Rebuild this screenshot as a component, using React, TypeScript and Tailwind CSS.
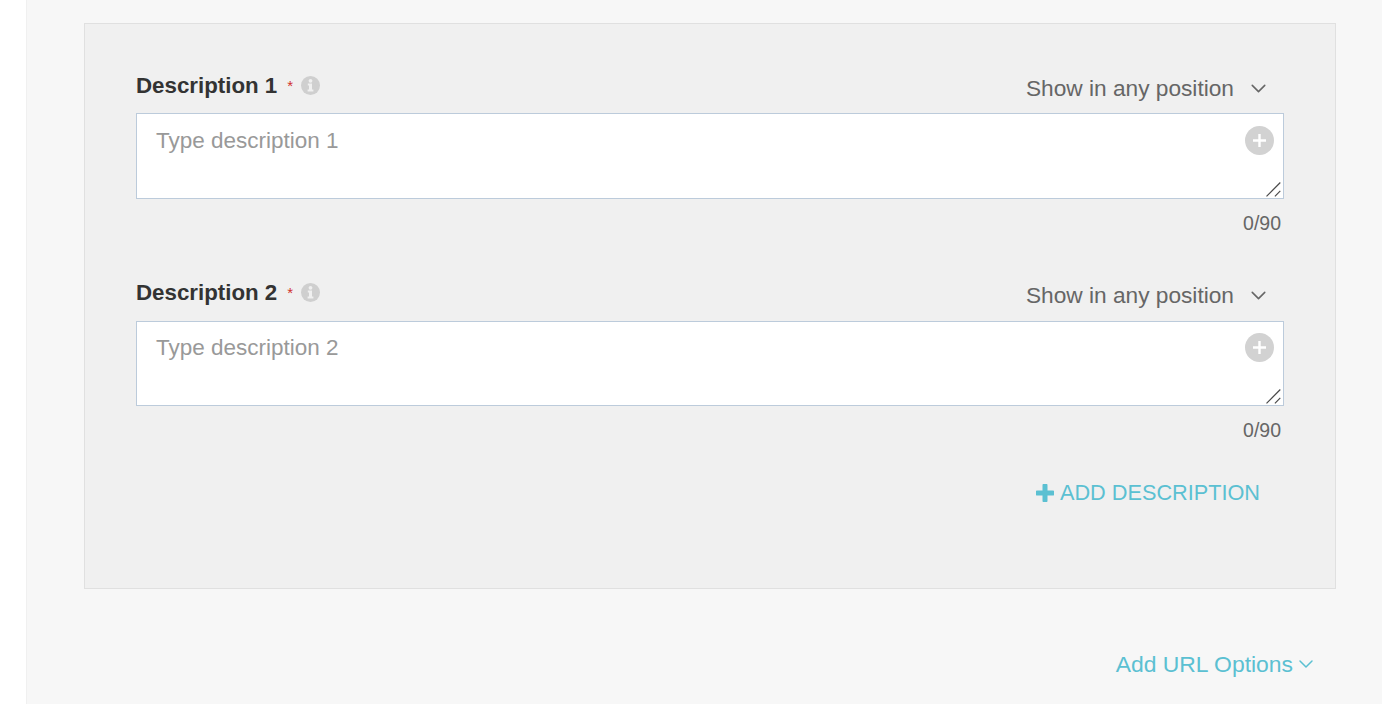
import { ChevronDown } from "lucide-react";

function DescriptionField({ n, compact }: { n: number; compact?: boolean }) {
  return (
    <div>
      <div className="flex items-start justify-between pr-[13px]">
        <div className="flex items-center h-[24px]">
          <span className="text-[22.3px] leading-[24px] font-bold text-[#333]">Description {n}</span>
          <span className="ml-[10px] text-[15px] leading-[24px] text-[#d0312d]">*</span>
          <svg className="ml-[8px] -mt-[2px]" width="19" height="19" viewBox="0 0 19 19">
            <circle cx="9.5" cy="9.5" r="9.5" fill="#cfcfcf" />
            <circle cx="9.5" cy="4.8" r="1.9" fill="#f0f0f0" />
            <path d="M6.8 7.6h4.2v6h1.4v2H6.6v-2H8v-4H6.8z" fill="#f0f0f0" />
          </svg>
        </div>
        <div className="flex items-center h-[24px] mt-[2px]">
          <span className="text-[22.7px] leading-[24px] text-[#666]">Show in any position</span>
          <ChevronDown className="ml-[12px] text-[#666]" size={25} strokeWidth={1.5} />
        </div>
      </div>
      <div className={compact ? "relative mt-[14px] h-[85px]" : "relative mt-[13px] h-[86px]"}>
        <textarea
          className={
            compact
              ? "block w-full h-full resize-none bg-white border border-[#bccbdb] pl-[19px] pt-[12px] text-[22.5px] leading-[28px] text-[#333] placeholder:text-[#999] outline-none"
              : "block w-full h-full resize-none bg-white border border-[#bccbdb] pl-[19px] pt-[13px] text-[22.5px] leading-[28px] text-[#333] placeholder:text-[#999] outline-none"
          }
          placeholder={`Type description ${n}`}
        />
        <div
          className={
            compact
              ? "absolute top-[12px] right-[10px] w-[29px] h-[29px] rounded-full bg-[#d2d2d2] flex items-center justify-center"
              : "absolute top-[13px] right-[10px] w-[29px] h-[29px] rounded-full bg-[#d2d2d2] flex items-center justify-center"
          }
        >
          <svg width="15" height="15" viewBox="0 0 15 15">
            <path d="M7.5 1v13M1 7.5h13" stroke="#fff" strokeWidth="2.4" />
          </svg>
        </div>
        {/* resize grip */}
        <svg className="absolute right-[2px] bottom-[1px] pointer-events-none" width="16" height="16" viewBox="0 0 16 16">
          <path d="M1.2 15L15 1.2M9.6 15L15 9.6" stroke="#fff" strokeWidth="1.2" />
          <path d="M.5 14.3L14.3.5M8.9 14.3L14.3 8.9" stroke="#4a4a4a" strokeWidth="1.2" />
        </svg>
      </div>
      <div className="mt-[12px] pr-[3px] text-right text-[19.5px] leading-[24px] text-[#666]">0/90</div>
    </div>
  );
}

export default function App() {
  return (
    <div className="h-[704px] overflow-hidden bg-white pl-[26px] font-['Liberation_Sans',Arial,sans-serif]">
      <div className="h-full bg-[#f7f7f7] border-l border-[#f0f0f0] pl-[57px] pr-[46px] pt-[23px]">
        <div className="h-[566px] bg-[#f0f0f0] border border-[#e0e0e0] px-[51px] pt-[50px]">
          <div className="flex flex-col gap-[46px]">
            <DescriptionField n={1} />
            <DescriptionField n={2} compact />
          </div>
          <div className="mt-[39px] pr-[24px] flex justify-end items-center text-[#5bc0d2]">
            <svg width="18" height="18" viewBox="0 0 18 18">
              <path d="M9 1.5v15M1.5 9h15" stroke="#5bc0d2" strokeWidth="5" strokeLinecap="round" />
            </svg>
            <span className="ml-[6px] text-[21.7px] leading-[24px]">ADD DESCRIPTION</span>
          </div>
        </div>
        <div className="mt-[63px] pr-[18px] flex justify-end items-center text-[#5bc0d2]">
          <span className="text-[22.9px] leading-[24px]">Add URL Options</span>
          <ChevronDown className="ml-[1px]" size={24} strokeWidth={1.5} />
        </div>
      </div>
    </div>
  );
}
